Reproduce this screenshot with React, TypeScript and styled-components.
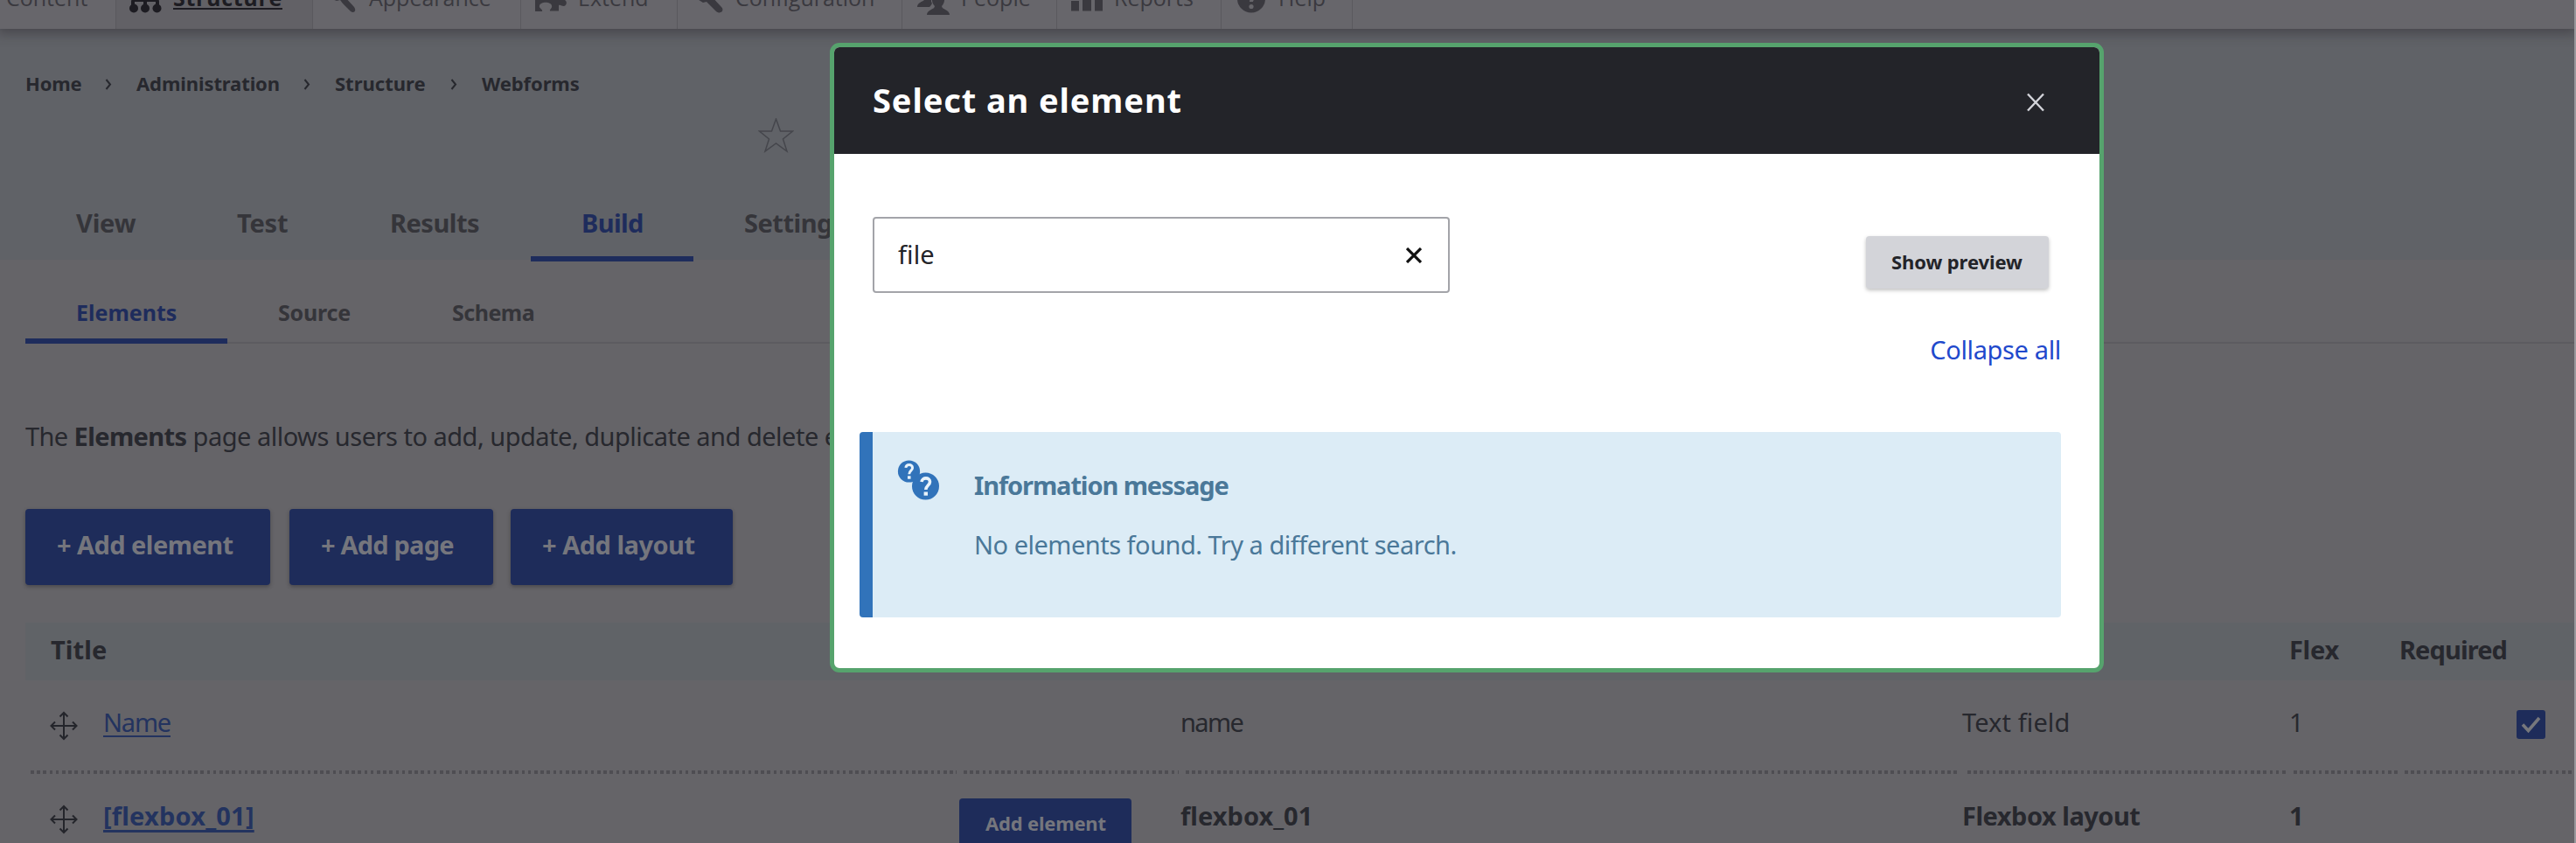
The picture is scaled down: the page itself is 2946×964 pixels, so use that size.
import React from "react";
import styled, { createGlobalStyle, css } from "styled-components";

const Global = createGlobalStyle`
  *, *::before, *::after { box-sizing: border-box; }
  html, body, #root { height: 100%; }
  body { margin: 0; overflow: hidden; background: #656468; }
`;

const Page = styled.div`
  position: relative;
  width: 100%;
  height: 964px;
  overflow: hidden;
  display: flex;
  flex-direction: column;
  border-right: 2px solid #98979b;
  background: #656468;
  color: #27282e;
  font-family: "Noto Sans", "Open Sans", sans-serif;
`;

type LabelProps = { $size?: number; $w?: number; $ls?: number; $c?: string };
const Label = styled.span<LabelProps>`
  display: inline-block;
  white-space: nowrap;
  line-height: 40px;
  font-size: ${(p) => p.$size ?? 29}px;
  font-weight: ${(p) => p.$w ?? 400};
  letter-spacing: ${(p) => p.$ls ?? 0}px;
  ${(p) => p.$c && css`color: ${p.$c};`}
`;

const Toolbar = styled.nav`
  display: flex;
  flex: none;
  height: 33px;
  background: #67666b;
  position: relative;
  box-shadow: 0 2px 14px 3px rgba(45, 42, 48, 0.5);
`;
const ToolItem = styled.a<{ $width: number; $active?: boolean; $pad: number }>`
  display: flex;
  flex: none;
  width: ${(p) => p.$width}px;
  height: 33px;
  padding-left: ${(p) => p.$pad}px;
  border-right: 1px solid #5a595e;
  overflow: hidden;
  background: ${(p) => (p.$active ? "#626166" : "transparent")};
  color: ${(p) => (p.$active ? "#1d1c22" : "#3a393f")};
  ${Label} {
    font-family: "Open Sans", sans-serif;
    line-height: 36px;
    margin-top: -21px;
    text-decoration: ${(p) => (p.$active ? "underline 2px" : "none")};
    text-underline-offset: 2px;
  }
`;
const ToolIcon = styled.svg`
  flex: none;
  width: 38px;
  height: 38px;
  margin-top: -22px;
  margin-right: 13px;
`;

const Header = styled.header`
  flex: none;
  height: 264px;
  background: #606267;
  display: flex;
  flex-direction: column;
`;
const Breadcrumb = styled.ol`
  list-style: none;
  margin: 42px 0 0;
  padding: 0 0 0 29px;
  display: flex;
  height: 40px;
`;
const Crumb = styled.li<{ $width: number }>`
  width: ${(p) => p.$width}px;
  flex: none;
  display: flex;
`;
const Chevron = styled.svg`
  width: 8px;
  height: 13px;
  margin: 15px 28px 0 auto;
`;
const StarRow = styled.div`
  height: 40px;
  margin-top: 20px;
  padding-left: 867px;
`;
const Tabs = styled.div`
  display: flex;
  height: 92px;
  margin-top: 32px;
  padding-left: 29px;
`;
const Tab = styled.a<{ $width: number; $active?: boolean; $h: number; $top: number }>`
  flex: none;
  width: ${(p) => p.$width}px;
  height: ${(p) => p.$h}px;
  padding: ${(p) => p.$top}px 0 0 58px;
  color: ${(p) => (p.$active ? "#1e2c5c" : "#35353a")};
  border-bottom: 6px solid ${(p) => (p.$active ? "#1e2c5c" : "transparent")};
`;
const SubTabs = styled.div`
  display: flex;
  flex: none;
  height: 96px;
  margin-left: 29px;
  background: linear-gradient(#5c5b60, #5c5b60) 0 94px / 100% 2px no-repeat;
`;
const Intro = styled.p`
  margin: 86px 0 0 29px;
  height: 40px;
  white-space: nowrap;
`;
const Actions = styled.div`
  display: flex;
  flex: none;
  margin: 63px 0 0 29px;
  height: 87px;
`;
const ActionButton = styled.button<{ $width: number; $gap: number }>`
  flex: none;
  width: ${(p) => p.$width}px;
  margin-right: ${(p) => p.$gap}px;
  height: 87px;
  padding: 0 0 5px 36px;
  text-align: left;
  border: 0;
  border-radius: 4px;
  background: #1e2c5a;
  color: #75767d;
  font-family: inherit;
  box-shadow: 0 2px 4px rgba(30, 30, 36, 0.4);
`;

const cols = "1067px 254px 894px 373px 127px 1fr";
const HeadRow = styled.div`
  display: grid;
  grid-template-columns: ${cols};
  flex: none;
  height: 66px;
  margin: 43px 0 0 29px;
  background: #606367;
`;
const Row = styled.div`
  display: grid;
  grid-template-columns: ${cols};
  flex: none;
  height: 107px;
  margin-left: 29px;
`;
const Cell = styled.div<{ $top?: number; $left?: number }>`
  padding: ${(p) => p.$top ?? 28}px 0 0 ${(p) => p.$left ?? 0}px;
  display: flex;
  align-items: flex-start;
`;
const RowCell = styled(Cell)`
  background: repeating-linear-gradient(90deg, #4e4d52 0 3.6px, transparent 3.6px 7.2px) 6px 103px / calc(100% - 8px) 4px no-repeat;
`;
const ElementLink = styled(Label)`
  margin-left: 29px;
  color: #23335f;
  text-decoration: underline ${(p) => (p.$w === 700 ? 3 : 2)}px;
  text-underline-offset: ${(p) => (p.$w === 700 ? 5 : 4)}px;
`;
const MoveIcon = styled.svg`
  flex: none;
  width: 32px;
  height: 34px;
  margin-top: 7px;
`;
const RowButton = styled.button`
  width: 197px;
  height: 60px;
  border: 0;
  border-radius: 4px;
  background: #1e2c5a;
  color: #75767d;
  font-family: inherit;
  padding: 0 0 5px 30px;
  text-align: left;
`;
const Check = styled.svg`
  display: block;
  width: 33px;
  height: 33px;
`;

const Dialog = styled.section`
  position: absolute;
  left: 949px;
  top: 49px;
  width: 1457px;
  height: 720px;
  border: 5px solid #56a36d;
  border-radius: 11px;
  background: #fff;
  display: flex;
  flex-direction: column;
  overflow: hidden;
`;
const DialogHead = styled.div`
  flex: none;
  height: 122px;
  background: #232429;
  color: #fff;
  display: flex;
  justify-content: space-between;
  padding: 40px 62px 0 44px;
`;
const CloseIcon = styled.svg`
  width: 22px;
  height: 22px;
  margin-top: 12px;
`;
const Filter = styled.div`
  display: flex;
  justify-content: space-between;
  align-items: flex-start;
  margin: 72px 58px 0 44px;
`;
const Search = styled.div`
  width: 660px;
  height: 87px;
  border: 2px solid #a3a4a9;
  border-radius: 4px;
  display: flex;
  justify-content: space-between;
  padding: 21px 30px 0 27px;
  color: #232429;
`;
const ClearIcon = styled.svg`
  width: 18px;
  height: 18px;
  margin-top: 12px;
`;
const PreviewButton = styled.button`
  width: 209px;
  height: 60px;
  margin-top: 22px;
  border: 0;
  border-radius: 4px;
  background: #d3d4d9;
  color: #232429;
  font-family: inherit;
  padding: 0 0 3px 29px;
  text-align: left;
  box-shadow: 0 2px 4px rgba(0, 0, 0, 0.25);
`;
const CollapseRow = styled.div`
  display: flex;
  justify-content: flex-end;
  margin: 45px 44px 0 0;
  height: 40px;
`;
const Message = styled.div`
  display: flex;
  flex: none;
  margin: 74px 44px 0 29px;
  height: 212px;
  border-radius: 4px;
  border-left: 15px solid #3173ba;
  background: #dcecf6;
  color: #4a7899;
  padding: 31px 0 0 28px;
`;
const MessageText = styled.div`
  display: flex;
  flex-direction: column;
  gap: 28px;
  margin: 10px 0 0 39px;
`;

const Move = () => (
  <MoveIcon viewBox="0 0 32 34" fill="none" stroke="#24252b" strokeWidth="2">
    <path d="M16 2v30M2 17h28M11.500 6.500L16 2l4.500 4.500M11.500 27.500L16 32l4.500-4.500M6 12.500L1.500 17 6 21.500M26 12.500l4.500 4.500-4.500 4.500" />
  </MoveIcon>
);

const icons: Record<string, React.ReactNode> = {
  structure: (
    <g>
      <path d="M19 6v22M5 30v-6q0-2 2-2h24q2 0 2 2v6" fill="none" stroke="currentColor" strokeWidth="4" />
      <circle cx="6" cy="31.500" r="5" /><circle cx="19" cy="31.500" r="5" /><circle cx="32.500" cy="31.500" r="5" />
    </g>
  ),
  appearance: <path d="M9 21l5 2 4-1 3 4 9 9c4 3 7-1 4-5L22 17z" />,
  extend: <path d="M2 10h34v12c3 2 2 6-1 7-3 0-4-2-6-1v6.500H19c-1-2 3-3 2-6-1-5-13-5-14 0-1 3 4 4 3 6.500H2z" />,
  config: <path d="M6 20l8 5 4-1 11 11c5 4 10-1 6-5L22 16z" />,
  people: (
    <path d="M1 30c0-5 6-6 8-8v-8h8v10c2 2 0 4-2 6zM12 39c0-6 9-6 9-10-5-5-4-15 4-15s9 10 4 15c0 4 9 4 9 10z" />
  ),
  reports: <path d="M2 23h9v11.500H2zM15 9h10v25.500H15zM29 13h9v21.500h-9z" />,
  help: (
    <g>
      <circle cx="20" cy="20.500" r="16" />
      <path d="M14 15c0-7 12-7 12 0 0 4-6 4-6 9" stroke="#67666b" strokeWidth="4" fill="none" />
      <circle cx="20" cy="29.500" r="2.600" fill="#67666b" />
    </g>
  ),
};

const tools = [
  { text: "Content", width: 133, pad: 7 },
  { text: "Structure", width: 225, pad: 14, icon: "structure", active: true, ls: 0.7 },
  { text: "Appearance", width: 238, pad: 13, icon: "appearance" },
  { text: "Extend", width: 179, pad: 14, icon: "extend" },
  { text: "Configuration", width: 257, pad: 15, icon: "config" },
  { text: "People", width: 177, pad: 16, icon: "people" },
  { text: "Reports", width: 188, pad: 14, icon: "reports" },
  { text: "Help", width: 150, pad: 14, icon: "help" },
];

const crumbs = [
  { text: "Home", width: 127, ls: -0.2 },
  { text: "Administration", width: 227, ls: -0.1 },
  { text: "Structure", width: 168, ls: 0 },
  { text: "Webforms", width: 120, ls: -0.1 },
];

const tabs = [
  { text: "View", width: 184, ls: -0.2 },
  { text: "Test", width: 175, ls: -0.2 },
  { text: "Results", width: 219, ls: -0.5 },
  { text: "Build", width: 186, ls: -0.6, active: true },
  { text: "Settings", width: 230, ls: -0.5 },
];

const subTabs = [
  { text: "Elements", width: 231, ls: 0, active: true },
  { text: "Source", width: 199, ls: -0.2 },
  { text: "Schema", width: 210, ls: -0.5 },
];

const Bubble = ({ x, y, r }: { x: number; y: number; r: number }) => (
  <g transform={`translate(${x} ${y}) scale(${r / 15})`}>
    <circle r="15.500" fill="#3173ba" />
    <path d="M-4.500-5c.5-5.500 9.500-5.500 9.500 0C5-1 .3-1 .3 4" fill="none" stroke="#e9f3fa" strokeWidth="3.600" />
    <rect x="-1.900" y="6.500" width="4.400" height="4.200" fill="#e9f3fa" />
  </g>
);

export default function App() {
  return (
    <Page>
      <Global />
      <Toolbar>
        {tools.map((t) => (
          <ToolItem key={t.text} $width={t.width} $pad={t.pad} $active={t.active}>
            {t.icon && <ToolIcon viewBox="0 0 38 38" overflow="visible" fill="currentColor">{icons[t.icon]}</ToolIcon>}
            <Label $size={25} $w={t.active ? 700 : 400} $ls={t.ls}>{t.text}</Label>
          </ToolItem>
        ))}
      </Toolbar>
      <Header>
        <Breadcrumb>
          {crumbs.map((c, i) => (
            <Crumb key={c.text} $width={c.width}>
              <Label $size={22} $w={700} $ls={c.ls}>{c.text}</Label>
              {i < 3 && (
                <Chevron viewBox="0 0 8 13" fill="none" stroke="#27282e" strokeWidth="2"><path d="M1.500 1l4.500 5.500L1.500 12" /></Chevron>
              )}
            </Crumb>
          ))}
        </Breadcrumb>
        <StarRow>
          <svg width="41" height="40" viewBox="0 0 41 40" fill="none" stroke="#45464c" strokeWidth="1.500">
            <path d="M20.500 1l5 14h14L28.500 24l4.500 14-12.500-9L8 38l4.500-14L1.500 15h14z" />
          </svg>
        </StarRow>
        <Tabs>
          {tabs.map((t) => (
            <Tab key={t.text} $width={t.width} $h={92} $top={28} $active={t.active}>
              <Label $w={700} $ls={t.ls}>{t.text}</Label>
            </Tab>
          ))}
        </Tabs>
      </Header>
      <SubTabs>
        {subTabs.map((t) => (
          <Tab key={t.text} $width={t.width} $h={96} $top={40} $active={t.active}>
            <Label $size={25} $w={700} $ls={t.ls}>{t.text}</Label>
          </Tab>
        ))}
      </SubTabs>
      <Intro>
        <Label $ls={-0.6}>The&nbsp;</Label>
        <Label $w={700} $ls={-0.6}>Elements</Label>
        <Label $ls={-0.5}>&nbsp;page allows users to add, update, duplicate and delete elements</Label>
      </Intro>
      <Actions>
        <ActionButton $width={280} $gap={22}><Label $w={700} $ls={-0.55}>+ Add element</Label></ActionButton>
        <ActionButton $width={233} $gap={20}><Label $w={700} $ls={-0.8}>+ Add page</Label></ActionButton>
        <ActionButton $width={254} $gap={0}><Label $w={700} $ls={-0.5}>+ Add layout</Label></ActionButton>
      </Actions>
      <HeadRow>
        <Cell $top={11} $left={29}><Label $w={700} $ls={0.1}>Title</Label></Cell>
        <Cell /><Cell /><Cell />
        <Cell $top={11} $left={1}><Label $w={700} $ls={-0.3}>Flex</Label></Cell>
        <Cell $top={11}><Label $w={700} $ls={-0.9}>Required</Label></Cell>
      </HeadRow>
      <Row>
        <RowCell $left={28}><Move /><ElementLink $ls={-1.2}>Name</ElementLink></RowCell>
        <RowCell />
        <RowCell><Label $ls={-1.6}>name</Label></RowCell>
        <RowCell><Label $ls={0.1}>Text field</Label></RowCell>
        <RowCell $left={1}><Label>1</Label></RowCell>
        <RowCell $top={34} $left={134}>
          <Check viewBox="0 0 33 33"><rect width="33" height="33" rx="3" fill="#1e2c5a" /><path d="M7 16.500l6.500 7L26 9" fill="none" stroke="#76777c" strokeWidth="3.600" /></Check>
        </RowCell>
      </Row>
      <Row>
        <RowCell $left={28}><Move /><ElementLink $w={700} $ls={0.2}>[flexbox_01]</ElementLink></RowCell>
        <RowCell $left={1}><RowButton><Label $size={22} $w={700} $ls={-0.2}>Add element</Label></RowButton></RowCell>
        <RowCell><Label $w={700}>flexbox_01</Label></RowCell>
        <RowCell><Label $w={700} $ls={-0.5}>Flexbox layout</Label></RowCell>
        <RowCell $left={1}><Label $w={700}>1</Label></RowCell>
        <RowCell />
      </Row>

      <Dialog>
        <DialogHead>
          <Label $size={38} $w={700} $ls={0.9}>Select an element</Label>
          <CloseIcon viewBox="0 0 22 22" stroke="#d3d4d9" strokeWidth="2.400"><path d="M2 1.500l18 19M20 1.500l-18 19" /></CloseIcon>
        </DialogHead>
        <Filter>
          <Search>
            <Label $ls={0.1}>file</Label>
            <ClearIcon viewBox="0 0 18 18" stroke="#111" strokeWidth="3.200"><path d="M1 1l16 16M17 1L1 17" /></ClearIcon>
          </Search>
          <PreviewButton><Label $size={22} $w={700} $ls={-0.1}>Show preview</Label></PreviewButton>
        </Filter>
        <CollapseRow><Label $ls={-0.35} $c="#1f49cc">Collapse all</Label></CollapseRow>
        <Message>
          <svg width="49" height="50" viewBox="1026 525 49 50"><Bubble x={1039.5} y={539} r={12.2} /><Bubble x={1058.5} y={556} r={15} /></svg>
          <MessageText>
            <Label $w={700} $ls={-1.1}>Information message</Label>
            <Label $ls={-0.5}>No elements found. Try a different search.</Label>
          </MessageText>
        </Message>
      </Dialog>
    </Page>
  );
}
